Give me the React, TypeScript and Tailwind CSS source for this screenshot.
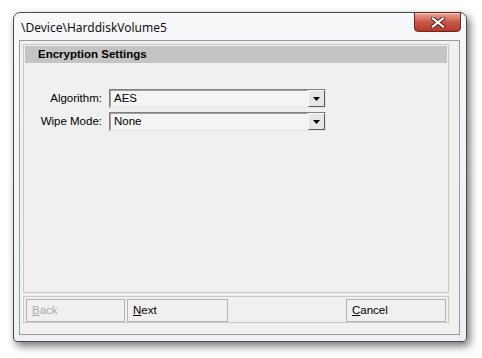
import React from "react";

const Combo = ({ value }: { value: string }) => (
  <div className="flex h-[19px] w-[217px] border border-t-[#808080] border-l-[#808080] border-b-[#e3e3e3] border-r-[#e3e3e3] bg-[#f4f4f4]">
    <div className="flex-1 flex items-center pl-[3px] text-[11.5px] text-black border border-t-[#a0a0a0] border-l-[#a0a0a0] border-b-[#f0f0f0] border-r-[#f0f0f0]">
      {value}
    </div>
    <div className="w-[17px] h-[17px] bg-[#e6e6e6] border border-t-[#fafafa] border-l-[#fafafa] border-b-[#5a5a5a] border-r-[#5a5a5a] flex items-center justify-center">
      <svg width="7" height="4" viewBox="0 0 7 4">
        <polygon points="0,0 7,0 3.5,4" fill="#000" />
      </svg>
    </div>
  </div>
);

const Btn = ({ first, rest, w, disabled }: { first: string; rest: string; w: string; disabled?: boolean }) => (
  <div
    className={`${w} h-[23px] border border-[#b4b4b4] bg-[#f0f0f0] flex items-center pl-[5px] text-[11.5px] ${
      disabled ? "text-[#a8a8a8]" : "text-black"
    }`}
  >
    <span className="underline underline-offset-[1px]">{first}</span>
    <span>{rest}</span>
  </div>
);

export default function App() {
  return (
    <div className="w-[482px] h-[358px] bg-white pl-[13px] pt-[12px]" style={{ fontFamily: '"Liberation Sans", Arial, sans-serif' }}>
      <div className="relative w-[454px] h-[330px] rounded-t-[7px] rounded-b-[4px] border border-[#4a4a4a] bg-gradient-to-b from-[#f7f8fa] to-[#eef1f4] shadow-[3px_4px_9px_rgba(0,0,0,0.55)]">
        {/* close button */}
        <div className="absolute top-[-1px] right-[5px] w-[47px] h-[20px] rounded-b-[4px] border border-[#6b2a20] bg-gradient-to-b from-[#e9a898] via-[#c9584a] to-[#b53a28] flex items-center justify-center shadow-[inset_0_1px_0_rgba(255,255,255,0.4)]">
          <svg width="14" height="11" viewBox="0 0 14 11">
            <path d="M2 1.5 L12 9.5 M12 1.5 L2 9.5" stroke="#4a1a14" strokeWidth="4" strokeLinecap="square" />
            <path d="M2 1.5 L12 9.5 M12 1.5 L2 9.5" stroke="#ffffff" strokeWidth="2.2" strokeLinecap="square" />
          </svg>
        </div>
        {/* title */}
        <div className="h-[27px] pl-[7px] flex items-center text-[12px] text-[#111] pt-[2px]" style={{ fontFamily: '"Noto Sans", "Open Sans", sans-serif' }}>
          \Device\HarddiskVolume5
        </div>
        {/* client */}
        <div className="ml-[5px] w-[441px] h-[295px] border border-[#9a9a9a] bg-[#f0f0f0] pt-[3px] pl-[3px]">
          <div className="w-[426px] h-[249px] border border-[#c9c9c9] p-[1px]">
            <div className="h-[17px] bg-[#c4c4c4] pl-[13px] flex items-center text-[11.5px] font-bold text-black">
              Encryption Settings
            </div>
            <div className="mt-[26px] flex flex-col gap-[4px]">
              <div className="flex items-center">
                <div className="w-[77px] text-right text-[11.5px] text-black">Algorithm:</div>
                <div className="ml-[7px]">
                  <Combo value="AES" />
                </div>
              </div>
              <div className="flex items-center">
                <div className="w-[77px] text-right text-[11.5px] text-black">Wipe Mode:</div>
                <div className="ml-[7px]">
                  <Combo value="None" />
                </div>
              </div>
            </div>
          </div>
          <div className="mt-[3px] w-[426px] h-[27px] border border-[#c9c9c9] flex items-end pl-[2px]">
            <Btn first="B" rest="ack" w="w-[99px]" disabled />
            <div className="ml-[2px]">
              <Btn first="N" rest="ext" w="w-[101px]" />
            </div>
            <div className="ml-[118px]">
              <Btn first="C" rest="ancel" w="w-[100px]" />
            </div>
          </div>
        </div>
      </div>
    </div>
  );
}
